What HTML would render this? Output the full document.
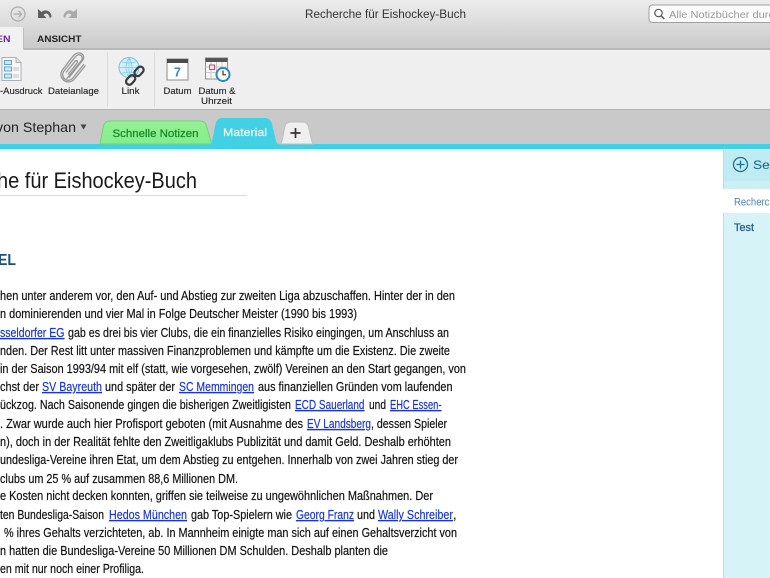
<!DOCTYPE html>
<html lang="de">
<head>
<meta charset="utf-8">
<title>Recherche für Eishockey-Buch</title>
<style>
html,body{margin:0;padding:0;background:#fff}
body{width:770px;height:578px;overflow:hidden;position:relative}
svg{display:block;position:absolute;left:0;top:0}
text{font-family:"Liberation Sans",sans-serif}
.b text{font-size:12.5px;fill:#111;stroke:#111;stroke-width:.18px}
.b .l{fill:#1a35d8;stroke:#1a35d8;text-decoration:underline}
.r text{font-size:9.5px;fill:#222;stroke:#222;stroke-width:.12px}
</style>
</head>
<body>
<svg width="770" height="578" viewBox="0 0 770 578" xmlns="http://www.w3.org/2000/svg" style="filter:blur(.3px)">
<defs>
<linearGradient id="tb" x1="0" y1="0" x2="0" y2="1"><stop offset="0" stop-color="#ececec"/><stop offset="1" stop-color="#c9c9c9"/></linearGradient>
<linearGradient id="gt" x1="0" y1="0" x2="0" y2="1"><stop offset="0" stop-color="#93f292"/><stop offset="1" stop-color="#84ec8c"/></linearGradient>
</defs>

<!-- title bar -->
<rect width="770" height="49" fill="url(#tb)"/>
<rect y="48" width="770" height="2" fill="#b8b8b8"/>
<!-- ribbon -->
<rect y="50" width="770" height="59" fill="#efefef"/>
<rect y="109" width="770" height="1" fill="#b4b4b4"/>
<!-- tab strip -->
<rect y="110" width="770" height="35" fill="#c9c9c9"/>
<rect y="144" width="770" height="5" fill="#41d0e4"/>
<rect y="149" width="770" height="2" fill="#dff7fa"/>

<!-- toolbar icons -->
<circle cx="18" cy="14" r="7" fill="none" stroke="#aeaeae" stroke-width="1.300"/>
<path d="M13.500 14h8M18.500 10.800l3.200 3.200-3.200 3.200" fill="none" stroke="#aeaeae" stroke-width="1.200"/>
<path d="M38 9v9h8.500l-3-3c2-2.600 5.500-2 6.200 3l1.800-1c0-6-6-8.500-10-5z" fill="#5f5f5f"/>
<path d="M77 9v9h-8.500l3-3c-2-2.600-5.500-2-6.200 3l-1.800-1c0-6 6-8.500 10-5z" fill="#a9a9a9"/>

<text x="385.500" y="18" text-anchor="middle" font-size="11.500" fill="#333" textLength="161" lengthAdjust="spacingAndGlyphs">Recherche für Eishockey-Buch</text>

<!-- search -->
<rect x="649" y="5" width="130" height="17.500" rx="3.500" fill="#fbfbfb" stroke="#a0a0a0"/>
<circle cx="658.500" cy="13" r="3.700" fill="none" stroke="#555" stroke-width="1.200"/>
<path d="M661.300 16l3 3" stroke="#555" stroke-width="1.500"/>
<text x="669" y="18" font-size="10.500" fill="#9a9a9a" textLength="105" lengthAdjust="spacingAndGlyphs">Alle Notizbücher durc</text>

<!-- ribbon tabs -->
<path d="M0 27h22q1.500 0 1.500 1.500V50H0z" fill="#f1f1f1"/>
<path d="M23.500 28v21" stroke="#bdbdbd"/>
<text x="-4" y="42" font-size="9.500" font-weight="bold" fill="#6a22b5" textLength="14.500" lengthAdjust="spacingAndGlyphs">EN</text>
<text x="37" y="42" font-size="9.500" font-weight="bold" fill="#222" textLength="44.500" lengthAdjust="spacingAndGlyphs">ANSICHT</text>

<g class="r">
<!-- Ausdruck icon -->
<path d="M2 57.500h14l5 5v18H2z" fill="#f8f8f8" stroke="#a9b2b8"/>
<path d="M16 57.500v5h5" fill="#dfe3e6" stroke="#a9b2b8"/>
<g fill="#cdeafa" stroke="#5fa7d3"><rect x="4.500" y="60.500" width="7" height="4"/><rect x="4.500" y="67" width="7" height="4"/><rect x="4.500" y="74" width="7" height="4"/></g>
<path d="M13 68h6M13 70h6M13 75h6M13 77h6" stroke="#c2c2c2"/>
<text x="0" y="94" textLength="42.500" lengthAdjust="spacingAndGlyphs">-Ausdruck</text>

<!-- paperclip -->
<g fill="none" stroke="#969696" stroke-width="1.300">
<path d="M66.500 79l14.500-18c2.200-2.800 1.200-5-.4-5.800-1.800-.9-3.600-.4-5.300 1.700L64 71c-2.300 3-1.200 6.500.7 8 2.600 2 6 1.700 8.200-1L84 64"/>
<path d="M69 77.500l13.500-17c3-4-.2-7-2.400-7.500-2.400-.5-4.700.2-7 3L62.700 69.500c-3 4-1.800 8.500 1 10.700 3.400 2.600 8 2.300 10.800-1.200L85.500 65.500"/>
<path d="M68 74.500l9-11.500c1.300-1.600-.4-3.400-2-1.800L66 72.500"/>
</g>
<text x="48" y="94" textLength="51" lengthAdjust="spacingAndGlyphs">Dateianlage</text>

<!-- separators -->
<path d="M107.500 52v55M154.500 52v55" stroke="#dcdcdc"/>

<!-- link -->
<circle cx="129" cy="67.500" r="10" fill="#d3f0fa" stroke="#6fc2e2"/>
<path d="M119 67.500h20M129 57.500v20M121 61.500q8 3 16 0M121 73.500q8-3 16 0M129 57.500q-6 10 0 20M129 57.500q6 10 0 20" fill="none" stroke="#7fcbe6" stroke-width=".8"/>
<g fill="none" stroke="#3b3b3b" stroke-width="2.200">
<rect x="136" y="66" width="6.500" height="10.500" rx="3.200" transform="rotate(42 139 71)"/>
<rect x="127.500" y="75" width="6.500" height="10.500" rx="3.200" transform="rotate(42 131 80)"/>
</g>
<text x="130.500" y="94" text-anchor="middle" textLength="18" lengthAdjust="spacingAndGlyphs">Link</text>

<!-- Datum -->
<rect x="167" y="59" width="21" height="21" fill="#fdfdfd" stroke="#8c8c8c"/>
<rect x="167" y="59" width="21" height="4" fill="#4b4b4b"/>
<text x="177.500" y="76.500" text-anchor="middle" style="font-size:12.500px;font-weight:bold;fill:#3a86bd;stroke:none">7</text>
<text x="177.500" y="94" text-anchor="middle" textLength="28" lengthAdjust="spacingAndGlyphs">Datum</text>

<!-- Datum & Uhrzeit -->
<rect x="205.500" y="58" width="22" height="21" fill="#f8f8f8" stroke="#8e8e8e"/>
<rect x="205.500" y="58" width="22" height="4" fill="#565656"/>
<path d="M205.500 67h22M205.500 72.500h22M211 62v17M216.500 62v17M222 62v17" stroke="#c9c9c9"/>
<rect x="209.500" y="65" width="5" height="4.500" fill="#fbe5ea" stroke="#cf4d6b"/>
<circle cx="223" cy="74.500" r="6.500" fill="#fff" stroke="#2e87bf" stroke-width="2"/>
<path d="M223 70.500v4.300h3" fill="none" stroke="#333" stroke-width="1.200"/>
<text x="217" y="94" text-anchor="middle" textLength="37" lengthAdjust="spacingAndGlyphs">Datum &amp;</text>
<text x="216.500" y="104" text-anchor="middle" textLength="31" lengthAdjust="spacingAndGlyphs">Uhrzeit</text>
</g>

<!-- notebook title -->
<text x="-4" y="132" font-size="14" fill="#222" textLength="80" lengthAdjust="spacingAndGlyphs"> von Stephan</text>
<path d="M80.500 124.500h6l-3 5z" fill="#444"/>

<!-- section tabs -->
<path d="M100 144l3-16q1-7 7-7h90q5 0 6.500 5l3.500 12q1 4.500 3.500 6z" fill="url(#gt)" stroke="#6fd47a"/>
<text x="155.500" y="137" text-anchor="middle" font-size="11" fill="#17892a" stroke="#17892a" stroke-width=".25" textLength="86" lengthAdjust="spacingAndGlyphs">Schnelle Notizen</text>
<path d="M209 145q2.500-1 3.500-6l3-15q1.500-6 7-6h42q6 0 7.500 6l3.500 15q1 4.500 3.500 6z" fill="#41d0e4"/>
<text x="245" y="136" text-anchor="middle" font-size="11" fill="#f0fcfe" stroke="#f0fcfe" stroke-width=".2" textLength="44" lengthAdjust="spacingAndGlyphs">Material</text>
<path d="M280 144q1.500-1 2.500-5l2-11q1-6 6-6h12q5 0 6 5l3 13q.500 2.500 2 4z" fill="#efefef" stroke="#bfbfbf"/>
<path d="M295.500 128v10M290.500 133h10" stroke="#333" stroke-width="1.700"/>

<!-- page title -->
<text x="-3" y="188" font-size="22" fill="#1a1a1a" textLength="200" lengthAdjust="spacingAndGlyphs">he für Eishockey-Buch</text>
<rect y="195" width="247" height="1" fill="#dedede"/>
<text x="-2" y="265" font-size="16" font-weight="bold" fill="#17507e" textLength="18" lengthAdjust="spacingAndGlyphs">EL</text>

<!-- body -->
<g class="b">
<text x="0" y="300" textLength="455" lengthAdjust="spacingAndGlyphs">hen unter anderem vor, den Auf- und Abstieg zur zweiten Liga abzuschaffen. Hinter der in den</text>
<text x="0" y="318" textLength="357" lengthAdjust="spacingAndGlyphs">n dominierenden und vier Mal in Folge Deutscher Meister (1990 bis 1993)</text>
<text class="l" x="0" y="337" textLength="64.500" lengthAdjust="spacingAndGlyphs">sseldorfer EG</text>
<text x="68" y="337" textLength="381" lengthAdjust="spacingAndGlyphs">gab es drei bis vier Clubs, die ein finanzielles Risiko eingingen, um Anschluss an</text>
<text x="0" y="355" textLength="450" lengthAdjust="spacingAndGlyphs">nden. Der Rest litt unter massiven Finanzproblemen und kämpfte um die Existenz. Die zweite</text>
<text x="0" y="373" textLength="466" lengthAdjust="spacingAndGlyphs">in der Saison 1993/94 mit elf (statt, wie vorgesehen, zwölf) Vereinen an den Start gegangen, von</text>
<text x="0" y="391" textLength="39" lengthAdjust="spacingAndGlyphs">chst der</text>
<text class="l" x="42" y="391" textLength="60" lengthAdjust="spacingAndGlyphs">SV Bayreuth</text>
<text x="105" y="391" textLength="70" lengthAdjust="spacingAndGlyphs">und später der</text>
<text class="l" x="179" y="391" textLength="75" lengthAdjust="spacingAndGlyphs">SC Memmingen</text>
<text x="258" y="391" textLength="194.500" lengthAdjust="spacingAndGlyphs">aus finanziellen Gründen vom laufenden</text>
<text x="0" y="409" textLength="291" lengthAdjust="spacingAndGlyphs">ückzog. Nach Saisonende gingen die bisherigen Zweitligisten</text>
<text class="l" x="295" y="409" textLength="69.500" lengthAdjust="spacingAndGlyphs">ECD Sauerland</text>
<text x="369" y="409" textLength="17" lengthAdjust="spacingAndGlyphs">und</text>
<text class="l" x="390" y="409" textLength="51.500" lengthAdjust="spacingAndGlyphs">EHC Essen-</text>
<text x="0" y="428" textLength="303" lengthAdjust="spacingAndGlyphs">. Zwar wurde auch hier Profisport geboten (mit Ausnahme des</text>
<text class="l" x="307" y="428" textLength="64" lengthAdjust="spacingAndGlyphs">EV Landsberg</text>
<text x="371" y="428" textLength="76" lengthAdjust="spacingAndGlyphs">, dessen Spieler</text>
<text x="0" y="446" textLength="451" lengthAdjust="spacingAndGlyphs">n), doch in der Realität fehlte den Zweitligaklubs Publizität und damit Geld. Deshalb erhöhten</text>
<text x="0" y="464" textLength="458" lengthAdjust="spacingAndGlyphs">undesliga-Vereine ihren Etat, um dem Abstieg zu entgehen. Innerhalb von zwei Jahren stieg der</text>
<text x="0" y="483" textLength="238" lengthAdjust="spacingAndGlyphs">clubs um 25 % auf zusammen 88,6 Millionen DM.</text>
<text x="0" y="500" textLength="433" lengthAdjust="spacingAndGlyphs">e Kosten nicht decken konnten, griffen sie teilweise zu ungewöhnlichen Maßnahmen. Der</text>
<text x="0" y="519" textLength="104" lengthAdjust="spacingAndGlyphs">ten Bundesliga-Saison</text>
<text class="l" x="109" y="519" textLength="78" lengthAdjust="spacingAndGlyphs">Hedos München</text>
<text x="191" y="519" textLength="101" lengthAdjust="spacingAndGlyphs">gab Top-Spielern wie</text>
<text class="l" x="296" y="519" textLength="58" lengthAdjust="spacingAndGlyphs">Georg Franz</text>
<text x="357" y="519" textLength="18" lengthAdjust="spacingAndGlyphs">und</text>
<text class="l" x="378" y="519" textLength="75" lengthAdjust="spacingAndGlyphs">Wally Schreiber</text>
<text x="453" y="519">,</text>
<text x="4" y="537" textLength="453" lengthAdjust="spacingAndGlyphs">% ihres Gehalts verzichteten, ab. In Mannheim einigte man sich auf einen Gehaltsverzicht von</text>
<text x="0" y="555" textLength="388" lengthAdjust="spacingAndGlyphs">n hatten die Bundesliga-Vereine 50 Millionen DM Schulden. Deshalb planten die</text>
<text x="0" y="573" textLength="144" lengthAdjust="spacingAndGlyphs">en mit nur noch einer Profiliga.</text>
</g>

<!-- sidebar -->
<rect x="723" y="150" width="47" height="428" fill="#d6f3f7"/>
<rect x="723" y="150" width="47" height="31" fill="#bfecf2"/>
<rect x="723" y="181" width="47" height="8" fill="#cdeff4"/>
<rect x="722" y="189" width="48" height="24" fill="#fff"/>
<path d="M723.500 150v39M723.500 213v365" stroke="#b4e0e6"/>
<circle cx="740.500" cy="164.500" r="7" fill="none" stroke="#1f6f8e" stroke-width="1.300"/>
<path d="M740.500 160.500v8M736.500 164.500h8" stroke="#1f6f8e" stroke-width="1.300"/>
<text x="753" y="169" font-size="12" fill="#1f6f8e" stroke="#1f6f8e" stroke-width=".15" textLength="31" lengthAdjust="spacingAndGlyphs">Seite</text>
<text x="734" y="205.500" font-size="11" fill="#4a86c4" textLength="46" lengthAdjust="spacingAndGlyphs">Recherche</text>
<text x="734" y="231" font-size="11" fill="#205a88" stroke="#205a88" stroke-width=".25" textLength="20" lengthAdjust="spacingAndGlyphs">Test</text>
</svg>
</body>
</html>
